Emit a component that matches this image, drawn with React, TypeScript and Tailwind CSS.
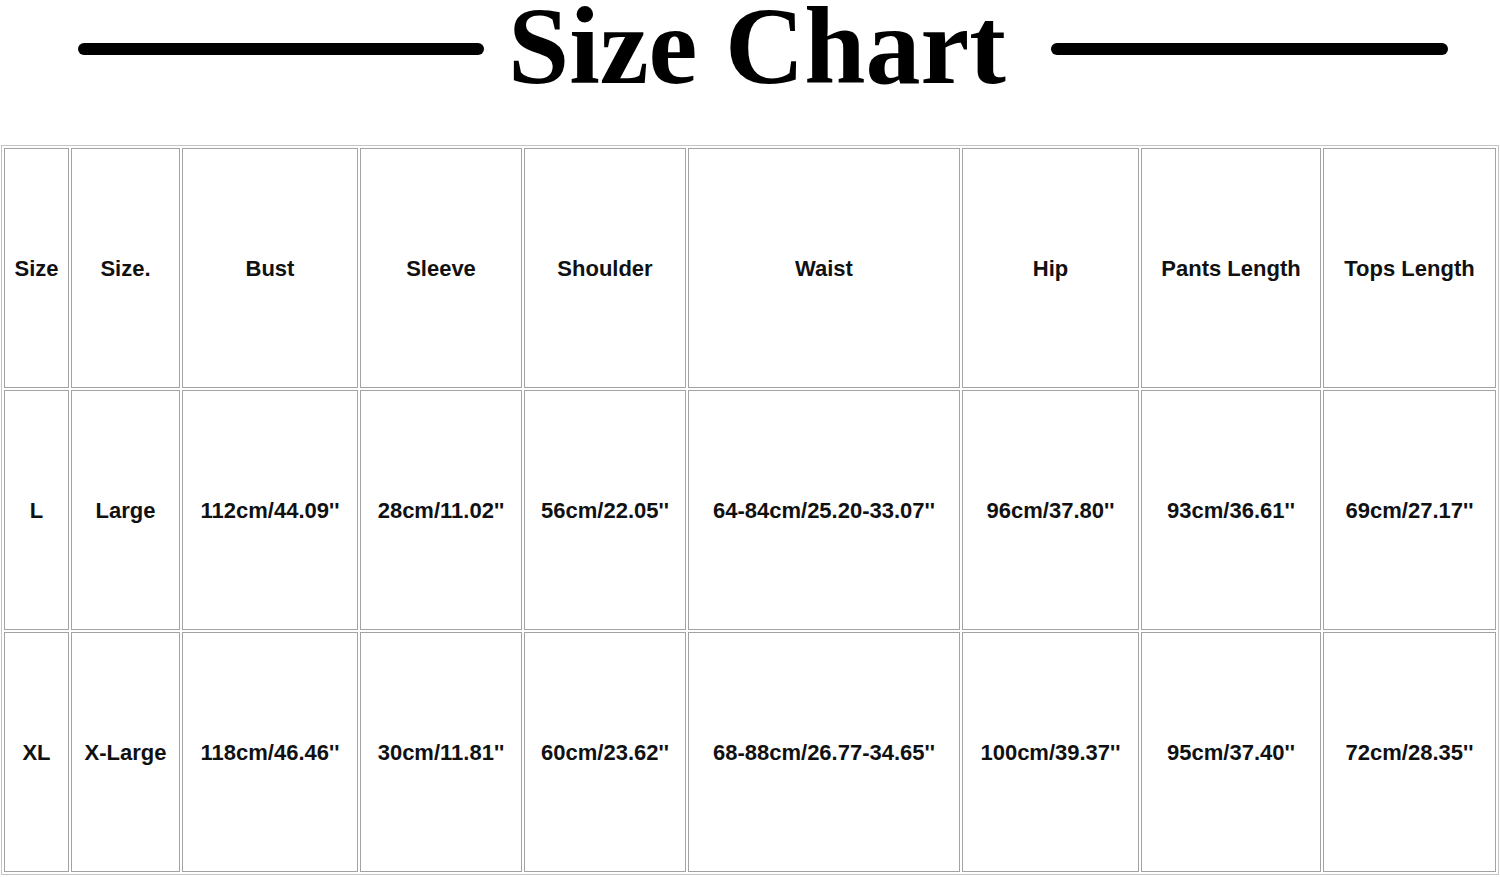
const columns = [
  { key: 'size', label: 'Size', w: 'w-[65px]' },
  { key: 'name', label: 'Size.', w: 'w-[109px]' },
  { key: 'bust', label: 'Bust', w: 'w-[176px]' },
  { key: 'sleeve', label: 'Sleeve', w: 'w-[162px]' },
  { key: 'shoulder', label: 'Shoulder', w: 'w-[162px]' },
  { key: 'waist', label: 'Waist', w: 'w-[272px]' },
  { key: 'hip', label: 'Hip', w: 'w-[177px]' },
  { key: 'pants', label: 'Pants Length', w: 'w-[180px]' },
  { key: 'tops', label: 'Tops Length', w: 'w-[173px]' },
]

const rows: string[][] = [
  ['L', 'Large', '112cm/44.09\'\'', '28cm/11.02\'\'', '56cm/22.05\'\'', '64-84cm/25.20-33.07\'\'', '96cm/37.80\'\'', '93cm/36.61\'\'', '69cm/27.17\'\''],
  ['XL', 'X-Large', '118cm/46.46\'\'', '30cm/11.81\'\'', '60cm/23.62\'\'', '68-88cm/26.77-34.65\'\'', '100cm/39.37\'\'', '95cm/37.40\'\'', '72cm/28.35\'\''],
]

function Cell({ text, w }: { text: string; w: string }) {
  return (
    <div className={`${w} h-[240px] shrink-0 flex items-center justify-center border border-[#a3a3a3] text-[22px] font-bold text-[#111] whitespace-nowrap`}>
      {text}
    </div>
  )
}

export default function App() {
  return (
    <div className="w-[1500px] h-[877px] bg-white overflow-hidden" style={{ fontFamily: '"Liberation Sans", Arial, sans-serif' }}>
      {/* title */}
      <div className="h-[145px] flex items-start pl-[78px]">
        <div className="mt-[43px] w-[406px] h-[12px] bg-black rounded-full" />
        <h1
          className="mt-[6px] ml-[24px] mr-[45px] text-[110px] leading-[80px] font-bold text-black whitespace-nowrap"
          style={{ fontFamily: '"Liberation Serif", "Times New Roman", serif' }}
        >
          Size Chart
        </h1>
        <div className="mt-[43px] w-[397px] h-[12px] bg-black rounded-full" />
      </div>

      {/* table */}
      <div className="ml-[1px] w-[1498px] border border-[#c4c4c4] p-[2px] flex flex-col gap-[2px]">
        <div className="flex gap-[2px]">
          {columns.map(c => (
            <Cell key={c.key} text={c.label} w={c.w} />
          ))}
        </div>
        {rows.map((r, i) => (
          <div key={i} className="flex gap-[2px]">
            {r.map((v, j) => (
              <Cell key={j} text={v} w={columns[j].w} />
            ))}
          </div>
        ))}
      </div>
    </div>
  )
}
